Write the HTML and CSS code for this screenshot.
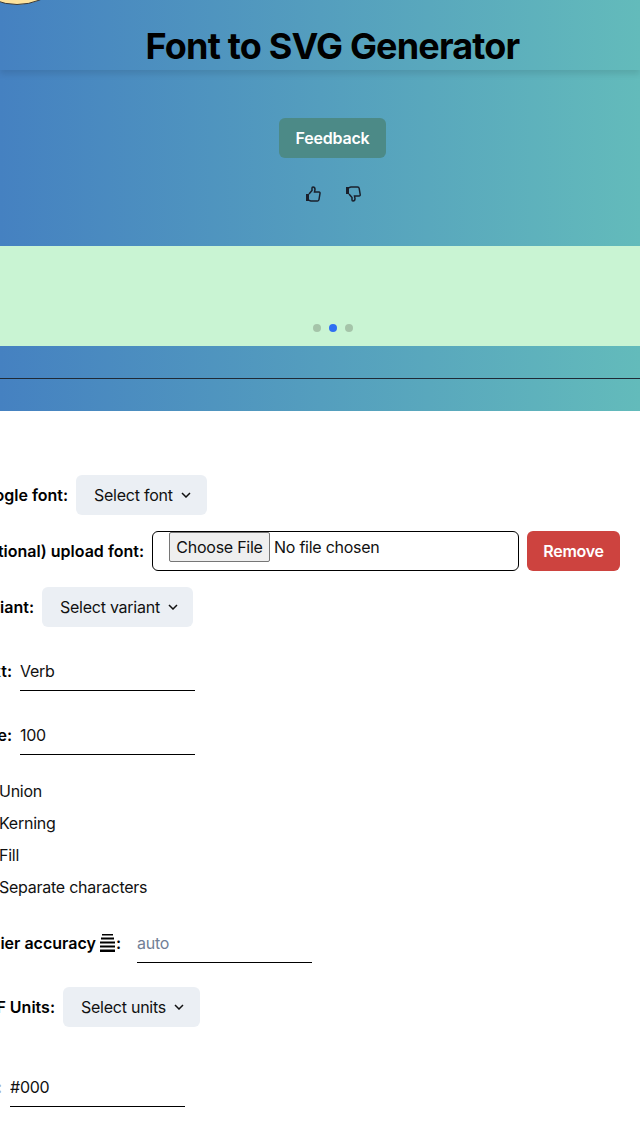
FILE: index.html
```html
<!DOCTYPE html>
<html>
<head>
<meta charset="utf-8">
<title>Font to SVG Generator</title>
<link rel="stylesheet" href="styles.css">
</head>
<body>
<div class="hero">
	<div class="logo"></div>
	<header class="topbar">
		<h1>Font to SVG Generator</h1>
	</header>
	<div class="feedback">
		<button class="btn-feedback">Feedback</button>
		<div class="thumbs">
			<svg viewBox="0 0 16 16" class="thumb"><path d="M1 8h3v7H1z" fill="#1a202c"/><path d="M4 8l3-3.500V2q0-1 1-1 2 0 2 2.500L9.500 6H14q1.200 0 1 1.500l-1 6q-.2 1.500-1.500 1.500H6q-1 0-2-1" fill="none" stroke="#1a202c" stroke-width="1.500"/></svg>
			<svg viewBox="0 0 16 16" class="thumb"><path d="M1 1h3v7H1z" fill="#1a202c"/><path d="M4 2q1-1 2-1h6.500Q14 1 14.200 2.500l1 6Q15.400 10 14 10H9.500l.5 2.500Q10 15 8 15q-1 0-1-1v-2.500L4 8" fill="none" stroke="#1a202c" stroke-width="1.500"/></svg>
		</div>
	</div>
	<div class="band">
		<div class="dots">
			<span class="dot"></span>
			<span class="dot active"></span>
			<span class="dot"></span>
		</div>
	</div>
	<div class="rule-wrap"><hr class="rule"></div>
</div>

<form class="options">
	<div class="row row-google">
		<label>Google font:</label>
		<button type="button" class="select">Select font <svg viewBox="0 0 10 6" class="chev"><path d="M1 1l4 4 4-4"/></svg></button>
	</div>
	<div class="row row-upload">
		<label>(Optional) upload font:</label>
		<div class="filebox"><input type="file" class="fileinput"></div>
		<button type="button" class="btn-remove">Remove</button>
	</div>
	<div class="row row-variant">
		<label>Variant:</label>
		<button type="button" class="select">Select variant <svg viewBox="0 0 10 6" class="chev"><path d="M1 1l4 4 4-4"/></svg></button>
	</div>
	<div class="row row-text gap-big">
		<label>Text:</label>
		<input class="line" value="Verb">
	</div>
	<div class="row row-size gap-big">
		<label>Size:</label>
		<input class="line" value="100">
	</div>
	<div class="checks">
		<div class="check">Union</div>
		<div class="check">Kerning</div>
		<div class="check">Fill</div>
		<div class="check">Separate characters</div>
	</div>
	<div class="row row-bezier gap-big">
		<label>Bezier accuracy<svg viewBox="0 0 17 20" class="lines"><path d="M3 1h11v1.500H3zM2 4.500h13v2H2zM1 8.500h15v2H1zM1 12.500h15v2H1zM1 16.500h15v2.500H1z"/></svg>:</label>
		<input class="line" placeholder="auto">
	</div>
	<div class="row row-units gap-big">
		<label>DXF Units:</label>
		<button type="button" class="select">Select units <svg viewBox="0 0 10 6" class="chev"><path d="M1 1l4 4 4-4"/></svg></button>
	</div>
	<div class="row row-color gap-huge">
		<label class="faint">Fill color:</label>
		<input class="line" value="#000">
	</div>
</form>
</body>
</html>
```

FILE: styles.css
```css
* { box-sizing: border-box; }
html, body { margin: 0; padding: 0; height: 1136px; overflow: hidden; background: #fff; }
body { font-family: Inter, "Noto Sans", sans-serif; font-size: 16px; letter-spacing: -.25px; color: #111; }

.hero { position: relative; height: 411px; background: linear-gradient(90deg, #4581c1, #63bbbb); overflow: hidden; }
.logo { position: absolute; left: -43px; top: -115px; width: 120px; height: 120px; border-radius: 50%; background: #fde39c; border: 1.500px solid #3a3a3a; z-index: 5; }
.topbar { height: 70px; background: linear-gradient(90deg, #4581c1, #63bbbb); box-shadow: 0 4px 6px rgba(0,0,0,.1); display: flex; justify-content: center; position: relative; z-index: 2; }
.topbar h1 { margin: 24px 0 0 25px; font-size: 36px; line-height: 44px; font-weight: 700; letter-spacing: -.83px; color: #000; white-space: nowrap; }

.feedback { height: 176px; padding: 48px 0 0 25px; display: flex; flex-direction: column; align-items: center; }
.btn-feedback { width: 107px; height: 40px; border: 0; border-radius: 6px; background: #4c8a87; color: #fff; font: 600 16px Inter, sans-serif; letter-spacing: -.2px; }
.thumbs { margin-top: 28px; display: flex; gap: 24px; }
.thumb { width: 16px; height: 16px; display: block; }

.band { height: 100px; background: #c9f4d3; display: flex; align-items: flex-end; justify-content: center; padding: 0 0 14px 26px; }
.dots { display: flex; gap: 8px; }
.dot { width: 8px; height: 8px; border-radius: 50%; background: #a5c4a9; }
.dot.active { background: #2e6ff2; }

.rule-wrap { padding-top: 32px; }
.rule { margin: 0; border: 0; border-top: 1px solid #1f2a36; }

.options { padding-top: 64px; }
.row { display: flex; align-items: center; height: 40px; margin-top: 16px; white-space: nowrap; }
.row:first-child { margin-top: 0; }
.row.gap-big { margin-top: 24px; }
.row.gap-huge { margin-top: 40px; }
.row label { font-weight: 600; letter-spacing: 0; display: flex; flex: none; align-items: center; justify-content: flex-end; overflow: hidden; margin-right: 8px; color: #000; }
.row label.faint { color: #a0aec0; }
.row-google label { width: 68px; }
.row-upload label { width: 144px; }
.row-variant label { width: 34px; }
.row-text label { width: 12px; }
.row-size label { width: 12px; }
.row-bezier label { width: 121px; margin-right: 16px; }
.row-units label { width: 55px; }
.row-color label { width: 2px; }

.select { height: 40px; padding: 0 16px 0 18px; border: 0; border-radius: 6px; background: #ebeff4; color: #111; font: 400 16px Inter, sans-serif; letter-spacing: -.25px; display: flex; align-items: center; gap: 8px; }
.row-variant .select { padding-right: 15px; }
.chev { width: 10px; height: 6px; fill: none; stroke: #111; stroke-width: 1.500; }

.filebox { width: 367px; height: 40px; border: 1px solid #000; border-radius: 6px; padding: 0 16px; }
.fileinput { font: 400 16px Inter, sans-serif; letter-spacing: -.25px; color: #111; width: 300px; height: 30px; }
.fileinput::file-selector-button { width: 101px; height: 30px; margin-right: 4px; padding: 0; border: 1px solid #767676; border-radius: 2px; background: #efefef; font: 400 16px Inter, sans-serif; letter-spacing: -.25px; color: #111; }
.btn-remove { width: 93px; height: 40px; margin-left: 8px; border: 0; border-radius: 6px; background: #cd433f; color: #fff; font: 600 16px Inter, sans-serif; letter-spacing: -.25px; }

.line { width: 175px; height: 40px; border: 0; border-bottom: 1px solid #000; padding: 0; outline: 0; background: none; font: 400 16px Inter, sans-serif; letter-spacing: -.25px; color: #111; }
.line::placeholder { color: #718096; opacity: 1; }

.checks { margin: 24px 0 0 -1px; display: flex; flex-direction: column; gap: 8px; }
.check { height: 24px; line-height: 24px; }
.lines { width: 17px; height: 20px; margin-left: 3px; flex: none; fill: #000; }
```
